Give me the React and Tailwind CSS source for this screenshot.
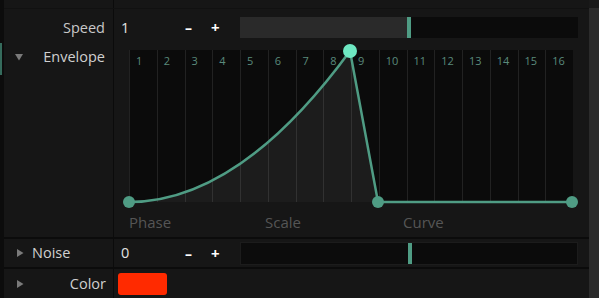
const COLS = Array.from({ length: 16 }, (_, i) => i + 1)

function Tri({ down }) {
  return (
    <svg width="8" height="8" viewBox="0 0 8 8" className="shrink-0">
      {down
        ? <path d="M0 1 L8 1 L4 7.5 Z" fill="#7a7a7a" />
        : <path d="M1 0 L7.5 4 L1 8 Z" fill="#7a7a7a" />}
    </svg>
  )
}

function Stepper({ value, fill, track, h }) {
  return (
    <div className="flex items-center flex-1 pl-[7px] pr-[11px]">
      <span className="w-[64px] text-[14.5px] text-[#e2e2e2]">{value}</span>
      <span className="w-[26px] text-[14px] font-bold text-white">–</span>
      <span className="w-[29px] text-[15px] font-bold text-white">+</span>
      <div className={`flex flex-1 ${h} bg-[#0b0b0b] ${track}`}>
        <div className={`w-[167px] ${fill}`} />
        <div className="w-[4px] bg-[#4f9c84]" />
      </div>
    </div>
  )
}

function Envelope() {
  return (
    <div className="flex-1 pl-[15px] pt-[4px]">
      <div className="relative w-[444px] h-[152px]">
        <div className="grid grid-cols-16 h-full">
          {COLS.map(n => (
            <div key={n} className="border-l border-[#222222] bg-[#0b0b0b] pl-[6px] pt-[3px] text-[11px] leading-[16px] text-[#5a8a7c]">
              {n}
            </div>
          ))}
        </div>
        <svg className="absolute inset-0 overflow-visible" width="444" height="152" viewBox="0 0 444 152">
          <path d="M0 152 Q110.5 152 221 1 L249 152 Z" fill="#ffffff" fillOpacity="0.07" />
          <path d="M0 152 Q110.5 152 221 1 L249 152 L443 152" fill="none" stroke="#4f9c84" strokeWidth="2.5" strokeLinejoin="round" />
          <circle cx="0" cy="152" r="6" fill="#4f9c84" />
          <circle cx="249" cy="152" r="6" fill="#4f9c84" />
          <circle cx="443" cy="152" r="6" fill="#4f9c84" />
          <circle cx="221" cy="1" r="7" fill="#6ee8c2" />
        </svg>
      </div>
      <div className="flex mt-[10px] text-[15px] leading-[20px] text-[#555555]">
        <span className="w-[136px]">Phase</span>
        <span className="w-[138px]">Scale</span>
        <span>Curve</span>
      </div>
    </div>
  )
}

export default function App() {
  return (
    <div className="flex w-[599px] h-[298px] bg-[#161616] overflow-hidden" style={{ fontFamily: '"Open Sans", "Noto Sans", sans-serif' }}>
      <div className="flex flex-col w-[4px] bg-[#0c0c0c]">
        <div className="h-[43px]" />
        <div className="w-[2px] h-[32px] bg-[#356b5c]" />
      </div>

      <div className="flex flex-col flex-1">
        <div className="flex h-[9px] border-b border-[#111111]">
          <div className="w-[109px]" />
          <div className="w-px bg-[#0b0b0b]" />
        </div>

        <div className="flex h-[37px]">
          <div className="w-[109px] flex items-center justify-end pr-[8px] text-[14.5px] text-[#c8c8c8]">Speed</div>
          <div className="w-px bg-[#0b0b0b]" />
          <Stepper value="1" fill="bg-[#2a2a2a]" track="" h="h-[21px]" />
        </div>

        <div className="flex h-[193px] border-b-2 border-[#0b0b0b]">
          <div className="w-[109px] flex items-start justify-between pl-[11px] pr-[8px] pt-[1px] text-[14.5px] leading-[20px] text-[#d0d0d0]">
            <span className="pt-[6px]"><Tri down /></span>
            <span>Envelope</span>
          </div>
          <div className="w-px bg-[#0b0b0b]" />
          <Envelope />
        </div>

        <div className="flex h-[30px] border-b-2 border-[#0b0b0b]">
          <div className="w-[109px] flex items-center gap-[8px] pl-[12px] text-[14.5px] text-[#d0d0d0]">
            <Tri />
            <span>Noise</span>
          </div>
          <div className="w-px bg-[#0b0b0b]" />
          <Stepper value="0" fill="bg-[#0c0c0c]" track="border border-[#1c1c1c]" h="h-[23px]" />
        </div>

        <div className="flex flex-1">
          <div className="w-[109px] flex items-center justify-between pl-[12px] pr-[7px] text-[14.5px] text-[#d0d0d0]">
            <Tri />
            <span>Color</span>
          </div>
          <div className="w-px bg-[#0b0b0b]" />
          <div className="flex items-center pl-[4px]">
            <div className="w-[49px] h-[22px] rounded-[3px] bg-[#ff2a00]" />
          </div>
        </div>
      </div>

      <div className="flex flex-col w-[10px]">
        <div className="h-[8px] bg-[#191919]" />
        <div className="flex-1 bg-[#2b2b2b]" />
      </div>
    </div>
  )
}
